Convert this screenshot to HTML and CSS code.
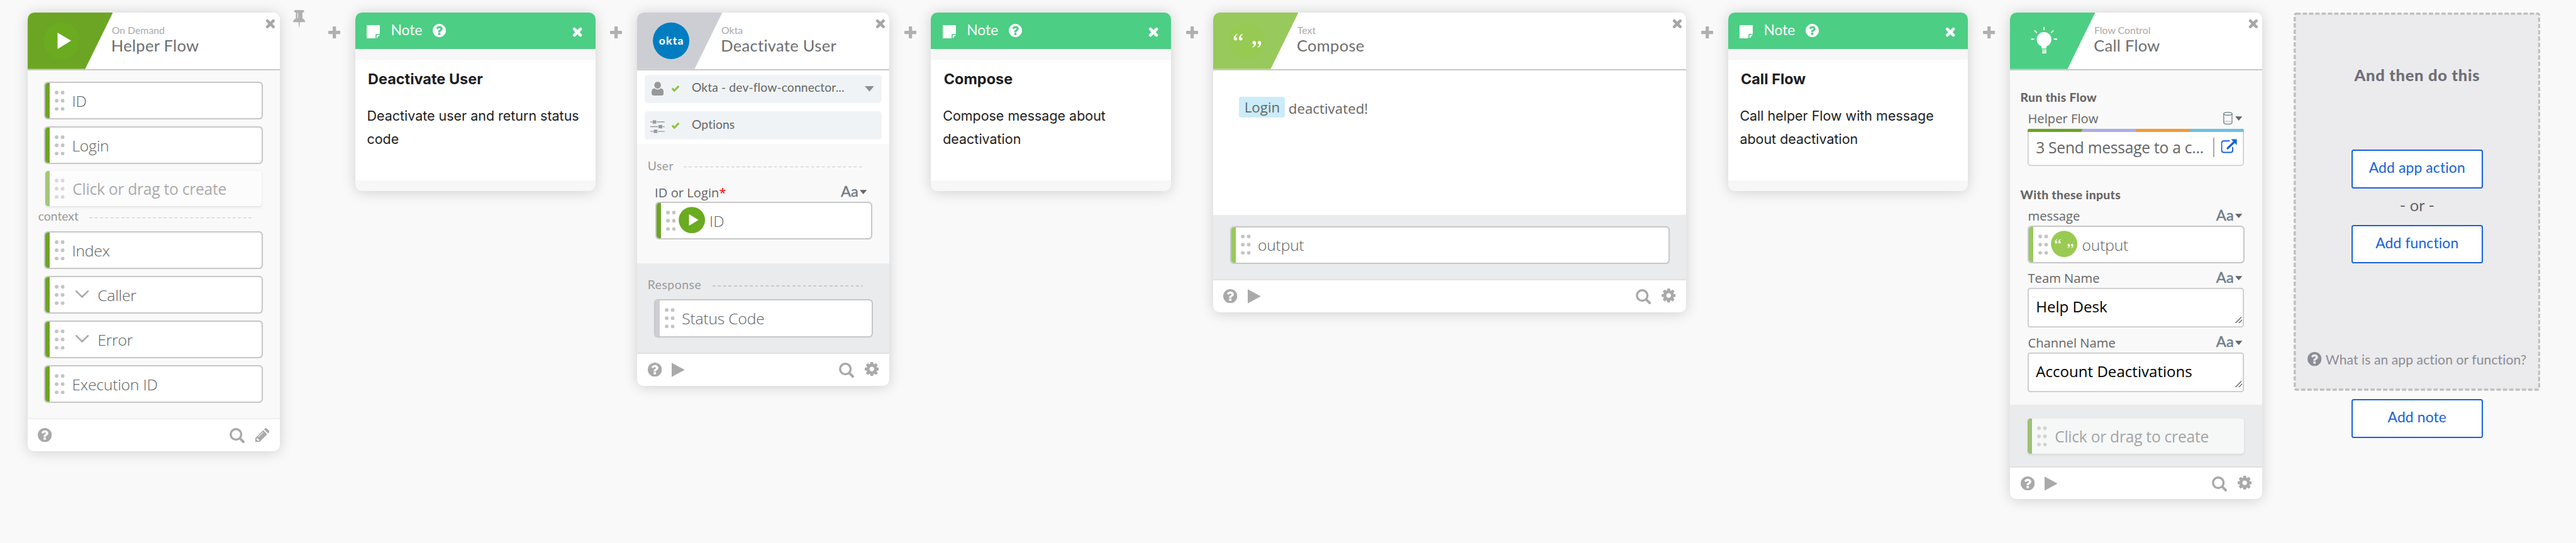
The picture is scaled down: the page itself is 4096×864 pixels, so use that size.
FILE: index.html
```html
<!DOCTYPE html>
<html lang="en">
<head>
<meta charset="utf-8">
<title>Helper Flow</title>
<link rel="stylesheet" href="styles.css">
</head>
<body>
<svg class="sprite" aria-hidden="true">
  <symbol id="close" viewBox="0 0 18 18"><path d="M3.6 3.6 14.4 14.4M14.4 3.6 3.6 14.4" stroke="currentColor" stroke-width="5.2" stroke-linecap="round"/></symbol>
  <symbol id="plus" viewBox="0 0 22 22"><rect x="0" y="8" width="22" height="6" rx="1.5" fill="currentColor"/><rect x="8" y="0" width="6" height="22" rx="1.5" fill="currentColor"/></symbol>
  <symbol id="pin" viewBox="0 0 22 32"><path fill="currentColor" fill-rule="evenodd" d="M4 0h14a2 2 0 0 1 0 4.2h-1v11c3 1.6 5 3.7 5 6.8H12.3L11.3 32h-.6L9.7 22H0c0-3.1 2-5.2 5-6.8v-11H4A2 2 0 0 1 4 0zM7.800 5h1.200v10H7.800z"/></symbol>
  <symbol id="help" viewBox="0 128 1536 1536"><path fill="currentColor" d="M896 1376v-192q0-14-9-23t-23-9h-192q-14 0-23 9t-9 23v192q0 14 9 23t23 9h192q14 0 23-9t9-23zm256-672q0-88-55.500-163t-138.500-116-170-41q-243 0-371 213-15 24 8 42l132 100q7 6 19 6 16 0 25-12 53-68 86-92 34-24 86-24 48 0 85.500 26t37.500 59q0 38-20 61t-68 45q-63 28-115.500 86.500t-52.500 125.500v36q0 14 9 23t23 9h192q14 0 23-9t9-23q0-19 21.500-49.500t54.500-49.500q32-18 49-28.500t46-35 44.500-48 28-60.500 12.500-81zm384 192q0 209-103 385.500t-279.500 279.500-385.500 103-385.500-103-279.500-279.500-103-385.500 103-385.500 279.500-279.500 385.500-103 385.500 103 279.500 279.500 103 385.500z"/></symbol>
  <symbol id="gear" viewBox="128 128 1536 1536"><path fill="currentColor" d="M1152 896q0-106-75-181t-181-75-181 75-75 181 75 181 181 75 181-75 75-181zm512-109v222q0 12-8 23t-20 13l-185 28q-19 54-39 91 35 50 107 138 10 12 10 25t-9 23q-27 37-99 108t-94 71q-12 0-26-9l-138-108q-44 23-91 38-16 136-29 186-7 28-36 28h-222q-14 0-24.500-8.500t-11.500-21.500l-28-184q-49-16-90-37l-141 107q-10 9-25 9-14 0-25-11-126-114-165-168-7-10-7-23 0-12 8-23 15-21 51-66.500t54-70.500q-27-50-41-99l-183-27q-13-2-21-12.500t-8-23.500v-222q0-12 8-23t19-13l186-28q14-46 39-92-40-57-107-138-10-12-10-24 0-10 9-23 26-36 98.500-107.500t94.500-71.500q13 0 26 10l138 107q44-23 91-38 16-136 29-186 7-28 36-28h222q14 0 24.500 8.500t11.500 21.500l28 184q49 16 90 37l142-107q9-9 24-9 13 0 25 10 129 119 165 170 7 8 7 22 0 12-8 23-15 21-51 66.500t-54 70.500q26 50 41 98l183 28q13 2 21 12.500t8 23.500z"/></symbol>
  <symbol id="search" viewBox="0 0 28 28"><circle cx="11.8" cy="11.8" r="9.7" fill="none" stroke="currentColor" stroke-width="4"/><path d="M19.5 19.5 25.5 25.5" stroke="currentColor" stroke-width="4.6" stroke-linecap="round"/></symbol>
  <symbol id="pencil" viewBox="0 0 26 26"><path fill="currentColor" fill-rule="evenodd" d="M0 18.500 14.500 4l7.500 7.500L7.500 26H0zM2.200 20v2h1.800v1.900h2.100L7.600 22.300 3.700 18.500zM14 7.200 5.200 16l.8.8L14.800 8z"/><path fill="currentColor" d="M16 2.500 17.700.8a2.400 2.400 0 0 1 3.400 0l4.100 4.100a2.400 2.400 0 0 1 0 3.400L23.500 10z"/></symbol>
  <symbol id="play" viewBox="0 0 24 26"><path fill="currentColor" d="M0 0 24 13 0 26z"/></symbol>
  <symbol id="caret" viewBox="0 0 17 10"><path fill="currentColor" d="M0 0H17L8.500 10z"/></symbol>
  <symbol id="dots" viewBox="0 0 18 37"><g fill="currentColor"><circle cx="3.500" cy="3.700" r="3.300"/><circle cx="14.300" cy="3.700" r="3.300"/><circle cx="3.500" cy="18.500" r="3.300"/><circle cx="14.300" cy="18.500" r="3.300"/><circle cx="3.500" cy="33.300" r="3.300"/><circle cx="14.300" cy="33.300" r="3.300"/></g></symbol>
  <symbol id="chevron" viewBox="0 0 24 14"><path d="M1.500 1.500 12 12 22.500 1.500" fill="none" stroke="currentColor" stroke-width="3" stroke-linecap="round"/></symbol>
  <symbol id="sticky" viewBox="0 0 24 24"><path fill="currentColor" d="M1 0H23a1 1 0 0 1 1 1V16H18a2 2 0 0 0-2 2v6H1a1 1 0 0 1-1-1V1a1 1 0 0 1 1-1z"/><path fill="currentColor" d="M18 17.700H24L18 24z"/></symbol>
  <symbol id="check" viewBox="0 0 16 13"><path d="M2 6.500 6 10.500 14 2.200" fill="none" stroke="#8cc63f" stroke-width="3.6"/></symbol>
  <symbol id="person" viewBox="0 0 22 25"><ellipse cx="11" cy="6.200" rx="6" ry="6.200" fill="currentColor"/><path fill="currentColor" d="M0 20c0-5 1.800-7.600 5-8 3.500 3 8.500 3 12 0 3.200.4 5 3 5 8 0 3.500-1.500 5-4 5H4c-2.500 0-4-1.500-4-5z"/></symbol>
  <symbol id="sliders" viewBox="0 0 26 24"><g fill="currentColor"><path d="M0 2.600H26V4.200H0zM0 11.200H26V12.800H0zM0 19.800H26V21.400H0z"/></g><g fill="currentColor" stroke="#f0f3f6"><rect x="3.700" y="0" width="7.600" height="7" rx="1"/><rect x="14.500" y="8.500" width="7.600" height="7" rx="1"/><rect x="5.700" y="17" width="7.600" height="7" rx="1"/></g></symbol>
  <symbol id="cylinder" viewBox="0 0 17 23"><g fill="none" stroke="#6e7c86" stroke-width="1.5"><ellipse cx="8.500" cy="3.400" rx="7.500" ry="2.600"/><path d="M1 3.400V19.600C1 23 16 23 16 19.600V3.400"/><path d="M2 18.500c3-2 10-2 13 0" stroke-dasharray="2 1" stroke-width="1"/></g></symbol>
  <symbol id="external" viewBox="0 0 31 27"><path d="M17 3.300H5A3.800 3.800 0 0 0 1.200 7.100V21.700A3.800 3.800 0 0 0 5 25.500H19A3.800 3.800 0 0 0 22.800 21.700V15" fill="none" stroke="#1662dd" stroke-width="2.4"/><path d="M13 17.500 26 5" stroke="#1662dd" stroke-width="4.2" stroke-linecap="round"/><path d="M19.500 0H31V11.500z" fill="#1662dd"/></symbol>
  <symbol id="grip" viewBox="0 0 14 13"><path d="M.5 12.500 12.500.5M7 12.500 13.500 6" stroke="#555" stroke-width="1.6"/></symbol>
  <symbol id="quotes" viewBox="0 0 50 26"><g fill="#fff"><path id="q" d="M7 0C2.500 1.500 0 4.500 0 8.200 0 10.600 1.300 12 3.400 12c1.900 0 3.200-1.300 3.200-3.100S5.400 6 3.700 6C3.500 4 4.700 2.200 7 .9z"/><use href="#q" x="9.500"/><g transform="rotate(180 25 12.500)"><use href="#q"/><use href="#q" x="9.500"/></g></g></symbol>
</svg>

<main class="flow">
  <article class="card">
    <header class="head">
      <svg class="tab" viewBox="0 0 154 102"><path fill="#6ca524" d="M0 0H154L104 102H0z"/><circle cx="61.5" cy="51" r="33" fill="#6aab20"/><path fill="#fff" d="M54 36.500 78.500 51 54 66z"/></svg>
      <div class="names"><div class="app"><span>On Demand</span></div><div class="action"><span>Helper Flow</span></div></div>
      <svg class="close"><use href="#close"/></svg>
    </header>
    <div class="helper-body">
      <div class="field green"><svg class="dots"><use href="#dots"/></svg><span>ID</span></div>
      <div class="field green"><svg class="dots"><use href="#dots"/></svg><span>Login</span></div>
      <div class="field green ghost"><svg class="dots"><use href="#dots"/></svg><span>Click or drag to create</span></div>
      <div class="divider context"><span>context</span><i></i></div>
      <div class="field green"><svg class="dots"><use href="#dots"/></svg><span>Index</span></div>
      <div class="field green"><svg class="dots"><use href="#dots"/></svg><svg class="chevron"><use href="#chevron"/></svg><span>Caller</span></div>
      <div class="field green"><svg class="dots"><use href="#dots"/></svg><svg class="chevron"><use href="#chevron"/></svg><span>Error</span></div>
      <div class="field green"><svg class="dots"><use href="#dots"/></svg><span>Execution ID</span></div>
    </div>
    <footer class="foot"><svg class="i-help"><use href="#help"/></svg><svg class="i-search"><use href="#search"/></svg><svg class="i-pencil"><use href="#pencil"/></svg></footer>
  </article>

  <div class="gap first"><svg class="pin"><use href="#pin"/></svg><svg class="plus"><use href="#plus"/></svg></div>

  <article class="note">
    <header class="note-head"><svg class="i-note"><use href="#sticky"/></svg><span>Note</span><svg class="i-note q"><use href="#help"/></svg><svg class="note-close"><use href="#close"/></svg></header>
    <div class="note-body"><h2>Deactivate User</h2><p>Deactivate user and return status<br>code</p></div>
  </article>

  <div class="gap"><svg class="plus"><use href="#plus"/></svg></div>

  <article class="card">
    <header class="head">
      <svg class="tab" viewBox="0 0 154 102"><path fill="#cdced3" d="M0 0H154L104 102H0z"/><circle cx="61.5" cy="51" r="33" fill="#007dc1"/><text class="okta" x="39.5" y="58" textLength="44">okta</text></svg>
      <div class="names"><div class="app"><span>Okta</span></div><div class="action"><span>Deactivate User</span></div></div>
      <svg class="close"><use href="#close"/></svg>
    </header>
    <div class="settings">
      <div class="setting"><svg class="i-person"><use href="#person"/></svg><svg class="check"><use href="#check"/></svg><span>Okta - dev-flow-connector...</span><svg class="i-caret"><use href="#caret"/></svg></div>
      <div class="setting"><svg class="i-sliders"><use href="#sliders"/></svg><svg class="check"><use href="#check"/></svg><span>Options</span></div>
    </div>
    <div class="user-body">
      <div class="divider"><span>User</span><i></i></div>
      <div class="label"><span>ID or Login</span><b>*</b><em>Aa</em><svg class="s-caret"><use href="#caret"/></svg></div>
      <div class="field green input"><svg class="dots"><use href="#dots"/></svg><svg class="badge" viewBox="0 0 48 48"><circle cx="24" cy="24" r="23.8" fill="#6aab20"/><path fill="#fff" d="M18.800 13.300 36 24 18.800 34.500z"/></svg><span>ID</span></div>
    </div>
    <div class="out response">
      <div class="divider"><span>Response</span><i></i></div>
      <div class="field silver"><svg class="dots"><use href="#dots"/></svg><span>Status Code</span></div>
    </div>
    <footer class="foot"><svg class="i-help"><use href="#help"/></svg><svg class="i-play"><use href="#play"/></svg><svg class="i-search"><use href="#search"/></svg><svg class="i-gear"><use href="#gear"/></svg></footer>
  </article>

  <div class="gap"><svg class="plus"><use href="#plus"/></svg></div>

  <article class="note">
    <header class="note-head"><svg class="i-note"><use href="#sticky"/></svg><span>Note</span><svg class="i-note q"><use href="#help"/></svg><svg class="note-close"><use href="#close"/></svg></header>
    <div class="note-body"><h2>Compose</h2><p>Compose message about<br>deactivation</p></div>
  </article>

  <div class="gap"><svg class="plus"><use href="#plus"/></svg></div>

  <article class="card wide">
    <header class="head">
      <svg class="tab" viewBox="0 0 154 102"><path fill="#98c95c" d="M0 0H154L104 102H0z"/><circle cx="61.5" cy="51" r="33" fill="#97ca52"/><use href="#quotes" x="37" y="38.5" width="50" height="26"/></svg>
      <div class="names"><div class="app"><span>Text</span></div><div class="action"><span>Compose</span></div></div>
      <svg class="close"><use href="#close"/></svg>
    </header>
    <div class="compose-body"><mark>Login</mark><span>deactivated!</span></div>
    <div class="out compose-out">
      <div class="field lime"><svg class="dots"><use href="#dots"/></svg><span>output</span></div>
    </div>
    <footer class="foot"><svg class="i-help"><use href="#help"/></svg><svg class="i-play"><use href="#play"/></svg><svg class="i-search"><use href="#search"/></svg><svg class="i-gear"><use href="#gear"/></svg></footer>
  </article>

  <div class="gap"><svg class="plus"><use href="#plus"/></svg></div>

  <article class="note">
    <header class="note-head"><svg class="i-note"><use href="#sticky"/></svg><span>Note</span><svg class="i-note q"><use href="#help"/></svg><svg class="note-close"><use href="#close"/></svg></header>
    <div class="note-body"><h2>Call Flow</h2><p>Call helper Flow with message<br>about deactivation</p></div>
  </article>

  <div class="gap"><svg class="plus"><use href="#plus"/></svg></div>

  <article class="card">
    <header class="head">
      <svg class="tab" viewBox="0 0 154 102"><path fill="#4cce84" d="M0 0H154L104 102H0z"/><g fill="#fff"><circle cx="61.5" cy="48.5" r="13.3"/><path d="M56.500 58H66.500L65.500 65H57.500z"/></g><g fill="none" stroke="#fff" stroke-width="2.2"><path d="M58 67.700H64.700V73H58M58 70.400H64.700" stroke-width="1.7"/><path d="M61.500 27V31M45 33 48.300 36.300M78 33 74.700 36.300M38.500 48H43M80 48H84.500" stroke-linecap="round"/></g></svg>
      <div class="names"><div class="app"><span>Flow Control</span></div><div class="action"><span>Call Flow</span></div></div>
      <svg class="close"><use href="#close"/></svg>
    </header>
    <div class="call-body">
      <h3>Run this Flow</h3>
      <div class="label"><span>Helper Flow</span><svg class="i-cylinder"><use href="#cylinder"/></svg><svg class="s-caret"><use href="#caret"/></svg></div>
      <div class="flow-select">
        <svg class="stripe" viewBox="0 0 391 6" preserveAspectRatio="none"><path fill="#6dc0e0" d="M290 0H391V6H290z"/><path fill="#f09a37" d="M190 0H295L292 6H190z"/><path fill="#acade3" d="M90 0H197.500L194.500 6H90z"/><path fill="#6ca524" d="M0 0H99.500L96.500 6H0z"/></svg>
        <div class="choice"><span>3 Send message to a c...</span><svg class="i-external"><use href="#external"/></svg></div>
      </div>
      <h3>With these inputs</h3>
      <div class="label message"><span>message</span><em>Aa</em><svg class="s-caret"><use href="#caret"/></svg></div>
      <div class="field lime input"><svg class="dots"><use href="#dots"/></svg><svg class="badge" viewBox="0 0 48 48"><circle cx="24" cy="24" r="23.8" fill="#99ca52"/><use href="#quotes" x="7" y="15.2" width="34" height="17.5"/></svg><span>output</span></div>
      <div class="label team"><span>Team Name</span><em>Aa</em><svg class="s-caret"><use href="#caret"/></svg></div>
      <div class="area"><span>Help Desk</span><svg class="grip"><use href="#grip"/></svg></div>
      <div class="label channel"><span>Channel Name</span><em>Aa</em><svg class="s-caret"><use href="#caret"/></svg></div>
      <div class="area"><span>Account Deactivations</span><svg class="grip"><use href="#grip"/></svg></div>
    </div>
    <div class="out call-out">
      <div class="field green ghost"><svg class="dots"><use href="#dots"/></svg><span>Click or drag to create</span></div>
    </div>
    <footer class="foot"><svg class="i-help"><use href="#help"/></svg><svg class="i-play"><use href="#play"/></svg><svg class="i-search"><use href="#search"/></svg><svg class="i-gear"><use href="#gear"/></svg></footer>
  </article>

  <aside class="next">
    <section class="panel">
      <svg class="outline" viewBox="0 0 446 684"><rect x="2" y="2" width="442" height="680" rx="3" fill="#ebebed" stroke="#c0c0c0" stroke-width="4" stroke-dasharray="7.8 3.6"/></svg>
      <h2>And then do this</h2>
      <button>Add app action</button>
      <div class="or">- or -</div>
      <button>Add function</button>
      <div class="what"><svg class="i-help"><use href="#help"/></svg><span>What is an app action or function?</span></div>
    </section>
    <button class="add-note">Add note</button>
  </aside>
</main>
</body>
</html>
```
FILE: styles.css
```css
* { box-sizing: border-box; }

html { background: #f9f9f9; overflow: hidden; }

body {
  zoom: 0.8797;
  margin: 0;
  width: 4656px;
  height: 982px;
  overflow: hidden;
  background: #f9f9f9;
  font-family: Lato, "Liberation Sans", sans-serif;
  color: #666;
}

h2, h3, p { margin: 0; }
svg { display: block; flex: none; }
span { white-space: nowrap; }
.sprite { position: absolute; width: 0; height: 0; }

.flow { display: flex; align-items: flex-start; padding: 23px 0 0 49.5px; }

/* connectors between cards */
.gap { flex: none; width: 75.5px; display: flex; justify-content: center; padding-top: 25px; color: #b0b0b0; }
.gap.first { width: 136.5px; justify-content: flex-start; padding-top: 0; }
.plus { width: 22px; height: 22px; }
.first .plus { margin: 25px 0 0 42px; }
.pin { width: 22px; height: 32px; margin: -5px 0 0 24px; }

/* cards */
.card, .note {
  flex: none;
  width: 456px;
  border-radius: 12px;
  overflow: hidden;
  background: #f9f9f9;
  box-shadow: 0 2px 24px rgba(0, 0, 0, 0.17);
}
.card.wide { width: 855.5px; }
.head { display: flex; height: 104px; background: #fff; border-bottom: 2.4px solid #c8c8c8; }
.tab { width: 154px; height: 102px; }
.okta { font: 900 20px Lato, sans-serif; fill: #fff; }
.names { flex: 1; padding-top: 21.3px; margin-left: -2.5px; }
.app { font-size: 18px; line-height: 20px; height: 21.2px; padding-left: 1px; color: #aaa; }
.action { font-size: 29px; line-height: 34px; color: #6e6e6e; letter-spacing: 0.35px; }
.close { width: 18px; height: 18px; margin: 11px 7.5px 0 0; color: #a6a6a6; }

.foot {
  position: relative;
  display: flex;
  align-items: center;
  height: 57.5px;
  padding: 0 19px;
  background: #fff;
  color: #a9a9a9;
  box-shadow: 0 -1px 3px rgba(0, 0, 0, 0.08);
}
.i-help { width: 25.5px; height: 25.5px; }
.i-play { width: 23.5px; height: 26px; margin-left: 18.5px; }
.i-search { width: 27.5px; height: 27.5px; margin: 2px 0 0 auto; }
.i-gear { width: 25.5px; height: 25.5px; margin: -1.5px 0 0 19px; }
.i-pencil { width: 25.5px; height: 25.5px; margin-left: 18.5px; }

/* value fields */
.field {
  display: flex;
  align-items: center;
  height: 64px;
  width: 391px;
  background: #fff;
  border-radius: 5px;
  overflow: hidden;
  box-shadow: 0 0 1px 1.8px #c6c6c6;
  font: 300 28px/64px "Open Sans", sans-serif;
  letter-spacing: -0.2px;
  color: #5f5f5f;
}
.field span { padding-top: 2px; }
.field::before { content: ""; flex: none; width: 8px; height: 64px; }
.green::before { background: #6ca524; }
.lime::before { background: #98c95c; }
.silver::before { background: #cdced3; }
.dots { width: 18px; height: 37px; margin-left: 9.5px; margin-right: 12.6px; color: #c4c4c4; }
.ghost { opacity: 0.6; box-shadow: 0 2px 4px rgba(0, 0, 0, 0.14); font-weight: 400; color: #777; letter-spacing: -0.3px; }
.chevron { width: 24px; height: 14px; margin: -2px 16px 0 6.4px; color: #aaa; }
.input { width: 388px; box-shadow: 0 0 1px 2.2px #c6c6c6; }
.input .dots { margin-left: 9px; margin-right: 5px; }
.badge { width: 48px; height: 48px; margin-right: 8px; margin-top: -1px; }

.helper-body { height: 631.5px; padding: 23px 0 0 32.5px; }
.helper-body .field { margin-bottom: 16.8px; }
.helper-body .ghost { margin: -2.6px 0 0; }
.helper-body .ghost span, .call-out .ghost span { padding-left: 1px; }
.divider { display: flex; align-items: center; font-size: 22px; line-height: 28px; color: #999; }
.divider i {
  flex: none;
  height: 2px;
  margin-top: 4px;
  background: repeating-linear-gradient(90deg, #cacaca 0 5.5px, transparent 5.5px 9.6px);
}
.context { height: 28px; margin: 5px 0 14.5px -13px; }
.context span { width: 92px; }
.context i { width: 295px; }

/* notes */
.note { width: 434px; background: #f7f7f7; padding-bottom: 19.3px; color: #1d1d21; }
.note-head { display: flex; height: 66px; padding: 0 22.5px 0 21px; background: #4cce84; color: #fff; font-size: 26px; line-height: 62px; }
.i-note { width: 24px; height: 24px; margin: 22px 19.5px 0 0; }
.i-note.q { margin: 20px 0 0 19px; }
.note-close { width: 18.5px; height: 18.5px; margin: 25.5px 0 0 auto; }
.note-body { height: 219px; margin-top: 18.7px; padding: 17px 0 0 21.3px; background: #fff; font: 400 24.4px/42px Inter, sans-serif; }
.note h2 { font: 700 26.7px/36px Inter, sans-serif; padding-left: 1.7px; margin-bottom: 28.2px; }

/* okta card */
.settings { display: flex; flex-direction: column; gap: 15.5px; padding: 8px 13.5px 7.5px; background: #fff; }
.setting {
  display: flex;
  align-items: center;
  height: 51px;
  padding-right: 14.5px;
  border-radius: 6px;
  background: #f0f3f6;
  color: #666;
  font-size: 22px;
  line-height: 51px;
  letter-spacing: 0.1px;
}
.setting span { margin-top: -3px; }
.i-person { width: 22px; height: 25px; margin: 0 14px 0 12.5px; color: #989898; }
.i-sliders { width: 26px; height: 24px; margin: 4px 12px 0 10.5px; color: #989898; }
.check { width: 16px; height: 13px; margin-right: 21px; }
.i-caret { width: 17px; height: 10px; margin-left: auto; color: #8f8f8f; }
.user-body { height: 216px; padding: 26px 0 0 19px; }
.user-body .divider, .response .divider { letter-spacing: 0.6px; }
.user-body .divider span { width: 65.5px; }
.user-body .divider i { width: 322.5px; }
.label { display: flex; align-items: center; height: 28px; width: 387px; padding-right: 3px; font: 400 23px/28px "Open Sans", sans-serif; color: #666; }
.label b { font-weight: 400; color: #f00; }
.label em { margin: -3px 0 0 auto; font: 400 27px/28px Lato, sans-serif; color: #6e7c86; -webkit-text-stroke: 0.5px #6e7c86; }
.s-caret { width: 13px; height: 8px; margin-left: 3px; color: #666; }
.user-body .label { margin: 19.8px 0 0 13px; }
.user-body .field { margin: 5.2px 0 0 16px; }
.out { background: #eaebed; }
.response { height: 164px; padding: 25px 0 0 19px; }
.response .divider span { width: 117px; }
.response .divider i { width: 272px; }
.response .field { margin: 15px 0 0 14px; }

/* compose card */
.compose-body { display: flex; height: 261.5px; padding: 48px 0 0 47.5px; background: #fff; font: 400 25.4px/38px "Open Sans", sans-serif; color: #666; }
.compose-body mark { flex: none; width: 83px; height: 38px; margin-right: 6px; text-align: center; border-radius: 4px; background: #cbecf8; color: #666; }
.compose-body span { margin-top: 2.2px; }
.compose-out { height: 118.5px; padding: 22.5px 0 0 33px; }
.compose-out .field { width: 790px; }

/* call flow card */
.call-body { padding: 36.2px 0 22.8px 32.5px; }
.call-body h3 { margin-left: -13.5px; font-size: 22px; line-height: 26px; font-weight: 900; letter-spacing: 0.35px; }
.call-body .label { width: 391px; margin-top: 11.2px; }
.i-cylinder { width: 17px; height: 23px; margin-left: auto; margin-right: 2px; }
.flow-select { width: 391px; height: 67.3px; margin: 4.3px 0 40.2px; background: #fff; border-radius: 3px 3px 6px 6px; overflow: hidden; box-shadow: inset 0 0 0 1.8px #cacaca; }
.stripe { width: 391px; height: 6px; }
.choice { display: flex; align-items: center; height: 56px; padding: 0 13.5px 0 14.5px; font: 400 28px/56px "Open Sans", sans-serif; letter-spacing: -0.3px; color: #666; }
.i-external { width: 43px; height: 36px; padding: 2px 0 7px 12px; margin-left: auto; border-left: 2.4px solid #aaa; }
.call-body .label.message { margin-top: 10.2px; }
.call-body .input { width: 387px; margin: 5.6px 0 0 2px; }
.call-body .label.team { margin-top: 14.8px; }
.call-body .label.channel { margin-top: 13.1px; }
.area {
  display: flex;
  justify-content: space-between;
  align-items: flex-end;
  width: 391px;
  height: 72px;
  margin-top: 3.8px;
  padding: 0 3px 10px 14.5px;
  border-radius: 5px;
  background: #fff;
  box-shadow: inset 0 0 0 2px #c9c9c9;
  font: 400 27.4px/56px "Open Sans", sans-serif;
  color: #000;
}
.grip { width: 13px; height: 12px; margin-bottom: -2px; }
.call-out { height: 113.2px; padding: 24.7px 0 0 32px; }

/* next-step panel */
.next { flex: none; width: 446px; margin-left: 57px; display: flex; flex-direction: column; align-items: center; }
.panel { position: relative; width: 446px; height: 684px; padding-top: 95.3px; display: flex; flex-direction: column; align-items: center; isolation: isolate; }
.outline { position: absolute; inset: 0; width: 446px; height: 684px; z-index: -1; }
.panel h2 { font-size: 29px; line-height: 36px; font-weight: 900; letter-spacing: 0.8px; color: #6e6e78; margin-bottom: 116.4px; }
button { width: 237px; height: 70px; padding: 0 0 5px; border: 2.3px solid #1662dd; border-radius: 4px; background: #fff; color: #1662dd; font: 400 26px/60px Lato, sans-serif; letter-spacing: 0.15px; }
.or { font-size: 29px; line-height: 36px; margin: 12.6px 0 17.2px; }
.what { display: flex; align-items: center; gap: 7px; margin-top: 159.5px; font-size: 24px; line-height: 30px; letter-spacing: 0.08px; color: #8c8c96; }
.what .i-help { margin-top: -3px; }
.add-note { margin-top: 15px; }
```
